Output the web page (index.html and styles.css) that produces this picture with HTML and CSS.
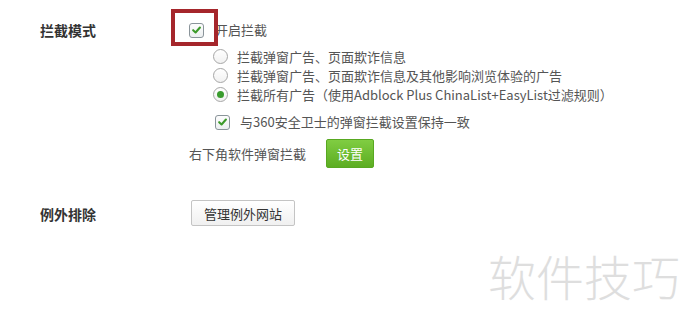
FILE: index.html
```html
<!DOCTYPE html>
<html lang="zh-CN">
<head>
<meta charset="utf-8">
<link rel="stylesheet" href="styles.css">
</head>
<body>
<div class="page">
  <div class="section">
    <div class="label">拦截模式</div>
    <div class="content">
      <div class="row first">
        <span class="check"><svg viewBox="0 0 14 14" width="14" height="14"><path d="M3.4 7.2 L6 9.7 L10.7 4.3" fill="none" stroke="#3c9a2a" stroke-width="2.2" stroke-linecap="round" stroke-linejoin="round"/></svg></span>
        <span class="text main">开启拦截</span>
      </div>
      <div class="options">
        <div class="radio-row"><span class="radio"></span><span class="text">拦截弹窗广告、页面欺诈信息</span></div>
        <div class="radio-row"><span class="radio"></span><span class="text">拦截弹窗广告、页面欺诈信息及其他影响浏览体验的广告</span></div>
        <div class="radio-row"><span class="radio on"></span><span class="text">拦截所有广告（使用Adblock Plus ChinaList+EasyList过滤规则）</span></div>
        <div class="row sync">
          <span class="check"><svg viewBox="0 0 14 14" width="14" height="14"><path d="M3.4 7.2 L6 9.7 L10.7 4.3" fill="none" stroke="#3c9a2a" stroke-width="2.2" stroke-linecap="round" stroke-linejoin="round"/></svg></span>
          <span class="text">与360安全卫士的弹窗拦截设置保持一致</span>
        </div>
      </div>
      <div class="row popup">
        <span class="text">右下角软件弹窗拦截</span>
        <button class="btn-green">设置</button>
      </div>
    </div>
  </div>
  <div class="section second">
    <div class="label">例外排除</div>
    <div class="content">
      <button class="btn-gray">管理例外网站</button>
    </div>
  </div>
  <div class="highlight"></div>
  <div class="watermark">软件技巧</div>
</div>
</body>
</html>
```
FILE: styles.css
```css
* { box-sizing: border-box; }
html, body { margin: 0; padding: 0; background: #fff; }
body {
  font-family: "Noto Sans CJK SC", "Noto Sans", sans-serif;
  font-size: 13px;
  color: #555;
  width: 689px;
  height: 328px;
  overflow: hidden;
}
.page { position: relative; padding: 20px 0 0 40px; height: 328px; }
.section { display: flex; }
.label {
  width: 149px;
  flex: none;
  font-size: 14px;
  font-weight: bold;
  color: #333;
  line-height: 20px;
}
.content { display: flex; flex-direction: column; }
.row { display: flex; align-items: center; height: 20px; }
.check {
  width: 15px; height: 15px;
  border: 1px solid #8a949a;
  border-radius: 3px;
  background: linear-gradient(#fdfdfd, #eceff0);
  display: flex; align-items: center; justify-content: center;
  flex: none;
}
.check svg { display: block; }
.first .text { margin-left: 11px; }
.text { line-height: 20px; white-space: nowrap; color: #555; }
.options { padding-left: 24px; margin-top: 7px; }
.radio-row { display: flex; align-items: center; height: 19px; }
.radio {
  width: 15px; height: 15px;
  border: 1px solid #a6a6a6;
  border-radius: 50%;
  background: linear-gradient(#fff, #f1f1f1);
  margin-right: 9px;
  flex: none;
  display: flex; align-items: center; justify-content: center;
}
.radio.on::after {
  content: "";
  width: 7px; height: 7px;
  border-radius: 50%;
  background: #3a9c2e;
}
.sync { margin-top: 8px; padding-left: 2px; }
.sync .text { margin-left: 10px; }
.popup { margin-top: 7px; height: 29px; }
.btn-green {
  margin-left: 20px;
  width: 48px; height: 29px;
  border: 1px solid #58a821;
  border-radius: 2px;
  background: linear-gradient(#80cd42, #5cad22);
  color: #fff;
  font-family: inherit;
  font-size: 13px;
  padding: 0;
}
.second { margin-top: 32px; align-items: center; }
.second .label { margin-top: 1px; }
.btn-gray {
  margin-left: 2px;
  width: 104px; height: 26px;
  border: 1px solid #c4c4c4;
  border-radius: 2px;
  background: linear-gradient(#ffffff, #f0f0f0);
  color: #333;
  font-family: inherit;
  font-size: 13px;
  padding: 0;
}
.highlight {
  position: absolute;
  left: 171px; top: 9px;
  width: 47px; height: 37px;
  border: 4px solid #a5262b;
}
.watermark {
  position: absolute;
  left: 488px; top: 246px;
  font-size: 48px;
  font-weight: 300;
  line-height: 58px;
  color: #dedede;
  white-space: nowrap;
}
```
